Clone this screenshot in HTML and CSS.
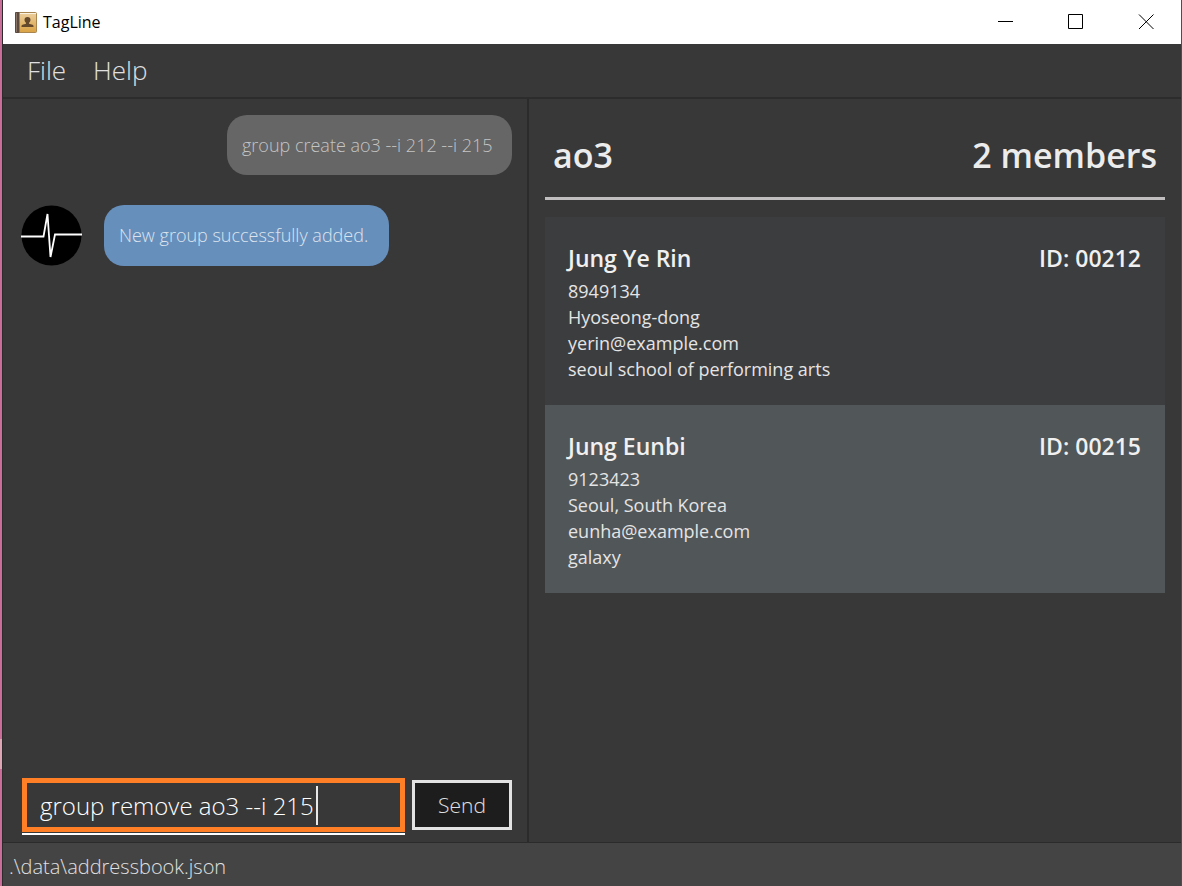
FILE: index.html
```html
<!DOCTYPE html>
<html lang="en">
<head>
<meta charset="utf-8">
<title>TagLine</title>
<link rel="stylesheet" href="styles.css">
</head>
<body>
<div class="window">
  <header class="titlebar">
    <svg class="app-icon" width="22" height="21" viewBox="0 0 22 21" aria-hidden="true">
      <defs><linearGradient id="cover" x1="0" y1="0" x2="0" y2="1"><stop offset="0" stop-color="#ecd0a0"/><stop offset="1" stop-color="#d9a243"/></linearGradient></defs>
      <rect x="0.500" y="0.500" width="21" height="20" rx="1" fill="url(#cover)" stroke="#a98550"/>
      <path d="M5 1.500h16" stroke="#fbf3e2"/>
      <rect width="4.500" height="21" rx="1" fill="#5b4a40"/>
      <path d="M1.500 1v19" stroke="#8a7465"/>
      <path d="M12.500 5c2 0 3 1.200 3 2.800 0 1.300-.7 2.300-1.500 3v.9l3.500 1.100c.7.300 1 .8 1 1.500v.7h-12v-.7c0-.7.3-1.200 1-1.500l3.500-1.100v-.9c-.8-.7-1.500-1.700-1.500-3C9.500 6.200 10.500 5 12.500 5z" fill="#64492c"/>
    </svg>
    <h1 class="app-name">TagLine</h1>
    <div class="window-controls">
      <button class="control" type="button" aria-label="Minimize"><svg width="16" height="16" viewBox="0 0 16 16"><path d="M0 7.500h15" stroke="#000"/></svg></button>
      <button class="control" type="button" aria-label="Maximize"><svg width="16" height="16" viewBox="0 0 16 16"><path d="M.5.500h14v14h-14z" fill="none" stroke="#000"/></svg></button>
      <button class="control" type="button" aria-label="Close"><svg width="16" height="16" viewBox="0 0 16 16"><path d="M1 .5l14.500 14.500M15.500 .5L1 15" stroke="#000"/></svg></button>
    </div>
  </header>
  <nav class="menubar">
    <button class="menu" type="button">File</button>
    <button class="menu" type="button">Help</button>
  </nav>
  <main class="panes">
    <section class="chat">
      <div class="messages">
        <div class="message message-user"><p class="bubble">group create ao3 --i 212 --i 215</p></div>
        <div class="message message-reply">
          <svg class="avatar" width="61" height="61" viewBox="0 0 61 61" aria-hidden="true">
            <circle cx="30.500" cy="30.500" r="30" fill="#000"/>
            <path d="M0 31.500h22.500L26.500 9l3 43L34 29.500h27" fill="none" stroke="#fff" stroke-width="1.800"/>
          </svg>
          <p class="bubble bubble-reply">New group successfully added.</p>
        </div>
      </div>
      <form class="composer">
        <div class="field">
          <input class="command" type="text" value="group remove ao3 --i 215" aria-label="Command">
          <span class="caret"></span>
        </div>
        <button class="send" type="button">Send</button>
      </form>
    </section>
    <section class="results">
      <header class="group-head">
        <h2 class="group-title">ao3</h2>
        <p class="group-title">2 members</p>
      </header>
      <ul class="cards">
        <li class="card">
          <div class="card-head"><h3 class="card-title">Jung Ye Rin</h3><span class="card-title">ID: 00212</span></div>
          <p>8949134</p>
          <p>Hyoseong-dong</p>
          <p>yerin@example.com</p>
          <p>seoul school of performing arts</p>
        </li>
        <li class="card card-alt">
          <div class="card-head"><h3 class="card-title">Jung Eunbi</h3><span class="card-title">ID: 00215</span></div>
          <p>9123423</p>
          <p>Seoul, South Korea</p>
          <p>eunha@example.com</p>
          <p>galaxy</p>
        </li>
      </ul>
    </section>
  </main>
  <footer class="statusbar">.\data\addressbook.json</footer>
</div>
</body>
</html>
```
FILE: styles.css
```css
* {
  box-sizing: border-box;
}

body {
  margin: 0;
  background: linear-gradient(#c86e98 0 739px, #dda6b4 739px 769px, #c86e98 769px);
  font-family: "Open Sans", "Noto Sans", sans-serif;
  font-weight: 300;
  color: #e0e0e0;
}

h1, h2, h3, p, ul {
  margin: 0;
  padding: 0;
}

button, input {
  font: inherit;
  color: inherit;
  border: 0;
  border-radius: 0;
  background: none;
}

.window {
  display: flex;
  flex-direction: column;
  min-height: 100vh;
  margin-left: 2px;
  background: #383838;
  border-left: 1px solid #2c2c2c;
  border-right: 1px solid #4e5048;
}

.titlebar {
  display: flex;
  align-items: center;
  height: 44px;
  padding-left: 12px;
  background: #fff;
  color: #000;
}

.app-name {
  margin-left: 6px;
  font-size: 16px;
  font-weight: 400;
}

.window-controls {
  display: flex;
  margin-left: auto;
}

.control {
  display: grid;
  place-items: center;
  width: 70px;
  height: 44px;
  padding: 0;
}

.menubar {
  display: flex;
  gap: 27px;
  height: 55px;
  padding: 0 24px 2px;
  border-bottom: 2px solid #2c2c2c;
}

.menu {
  padding: 0;
  font-size: 26px;
}

.panes {
  display: grid;
  grid-template-columns: 526fr 652fr;
  flex: 1;
}

.chat {
  display: flex;
  flex-direction: column;
  justify-content: space-between;
  padding: 16px 15px 7px 18px;
  border-right: 2px solid #2b2b2b;
}

.messages {
  display: flex;
  flex-direction: column;
  gap: 30px;
}

.message {
  display: flex;
}

.message-user {
  justify-content: flex-end;
}

.message-reply {
  gap: 22px;
}

.bubble {
  min-width: 285px;
  padding: 0 15px;
  border-radius: 20px;
  background: #666;
  color: #c4c4c4;
  font-size: 18px;
  line-height: 60px;
}

.bubble-reply {
  background: #678fbc;
  color: #dbe4ee;
}

.composer {
  display: flex;
  align-items: flex-start;
  gap: 7px;
  padding-left: 1px;
}

.field {
  position: relative;
  flex: 1;
  border-bottom: 2px solid #fff;
  padding-bottom: 1px;
}

.command {
  display: block;
  width: 100%;
  height: 54px;
  padding: 0 13px;
  border: 5px solid #ff7f27;
  outline: 0;
  color: #fff;
  font-size: 24px;
  caret-color: transparent;
}

.caret {
  position: absolute;
  top: 8px;
  left: 294px;
  width: 2px;
  height: 39px;
  background: #e8e8e8;
}

.send {
  width: 100px;
  height: 50px;
  margin-top: 2px;
  padding: 0;
  border: 3px solid #e2e2e2;
  background: #1d1d1d;
  font-size: 21px;
}

.results {
  padding: 0 16px;
}

.group-head {
  display: flex;
  justify-content: space-between;
  padding: 23px 8px 9px;
  border-bottom: 3px solid #c0bebe;
  margin-bottom: 17px;
}

.group-title {
  color: #ececec;
  font-size: 34px;
  font-weight: 600;
  line-height: 66px;
}

.cards {
  list-style: none;
}

.card {
  padding: 23px 24px 23px 23px;
  background: #3c3d3f;
  color: #e4e4e4;
  font-size: 18px;
  font-weight: 400;
  line-height: 26px;
}

.card-alt {
  background: #515658;
}

.card-head {
  display: flex;
  justify-content: space-between;
  padding-bottom: 1px;
}

.card-title {
  color: #f0f0f0;
  font-size: 23px;
  font-weight: 600;
  line-height: 37px;
}

.statusbar {
  height: 44px;
  padding: 0 6px;
  border-top: 1px solid #2b2b2b;
  background: #444;
  font-size: 20px;
  line-height: 48px;
}
```
